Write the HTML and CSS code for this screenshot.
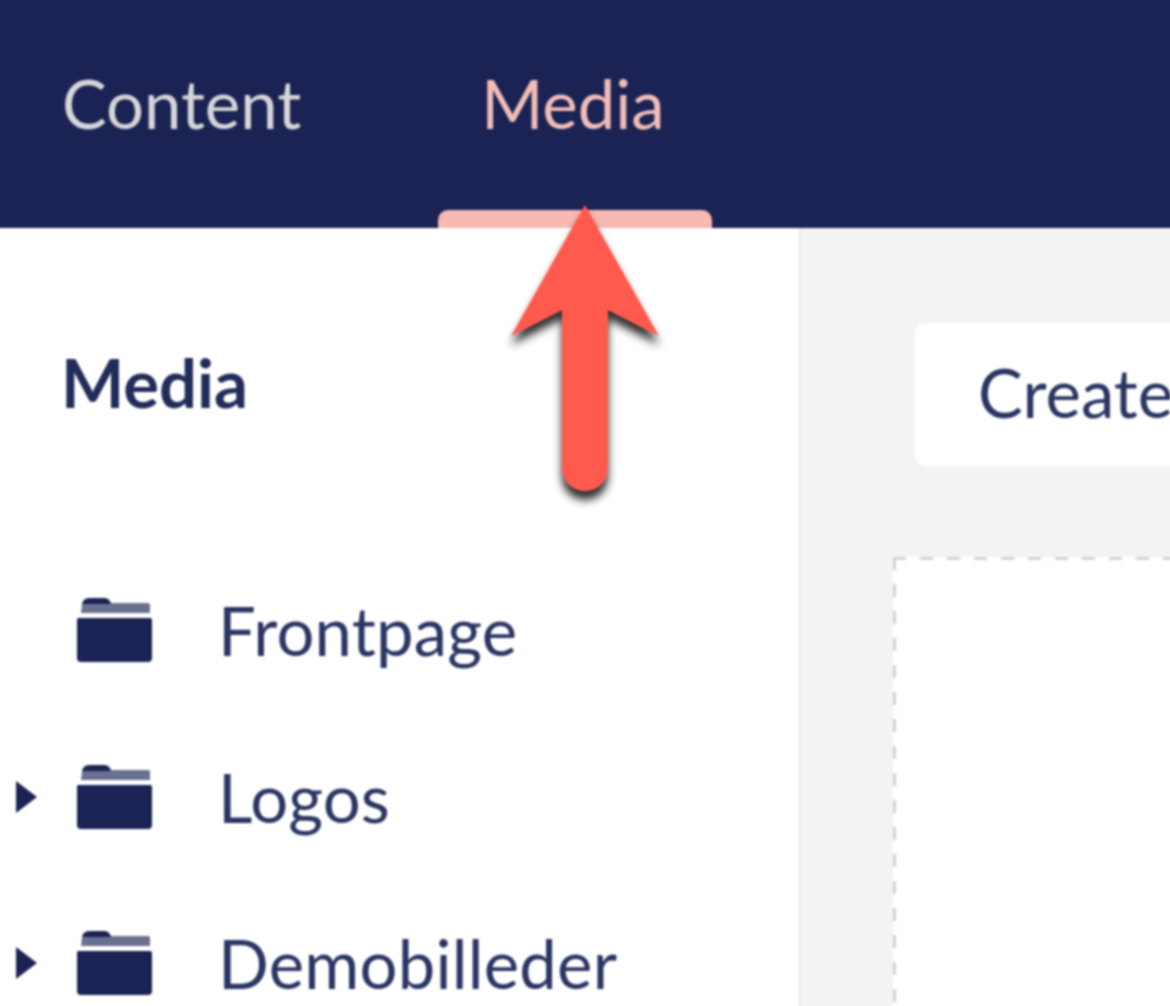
FILE: index.html
```html
<!DOCTYPE html>
<html lang="en">
<head>
<meta charset="utf-8">
<title>Media</title>
<link rel="stylesheet" href="styles.css">
</head>
<body>
<div class="page">
  <header class="topbar">
    <nav class="tabs">
      <a class="tab">Content</a>
      <a class="tab tab-active">Media</a>
    </nav>
  </header>
  <div class="body">
    <aside class="sidebar">
      <h2 class="side-title">Media</h2>
      <ul class="tree">
        <li class="tree-row">
          <span class="caret caret-none"></span>
          <svg class="folder" viewBox="0 0 76 66"><use href="#folder-shape"/></svg>
          <span class="tree-label">Frontpage</span>
        </li>
        <li class="tree-row">
          <span class="caret"></span>
          <svg class="folder" viewBox="0 0 76 66"><use href="#folder-shape"/></svg>
          <span class="tree-label">Logos</span>
        </li>
        <li class="tree-row">
          <span class="caret"></span>
          <svg class="folder" viewBox="0 0 76 66"><use href="#folder-shape"/></svg>
          <span class="tree-label">Demobilleder</span>
        </li>
      </ul>
    </aside>
    <main class="main">
      <button class="create">Create</button>
      <div class="dropzone"></div>
    </main>
  </div>
  <svg class="arrow" viewBox="0 0 190 320" width="190" height="320">
    <defs>
      <filter id="arrow-shadow" x="-30%" y="-10%" width="160%" height="125%">
        <feDropShadow dx="0" dy="9" stdDeviation="4.5" flood-color="#222222" flood-opacity="0.95"/>
      </filter>
    </defs>
    <path filter="url(#arrow-shadow)" fill="#ff5a4d" d="M95 5 L169 136 L118 110 L118 268 A23 23 0 0 1 72 268 L72 110 L21 136 Z"/>
  </svg>
  <svg class="defs" width="0" height="0">
    <symbol id="folder-shape" viewBox="0 0 76 66">
      <path fill="#1a2353" d="M2 21 H74 A2 2 0 0 1 76 23 V61 A4 4 0 0 1 72 65 H5 A4 4 0 0 1 1 61 V23 A2 2 0 0 1 2 21 Z"/>
      <path fill="#1a2353" d="M6 8 Q7 1 14 1 H28 Q33 1 35 6 H72 A2 2 0 0 1 74 8 V16 H5 Z" opacity=".65"/>
      <path fill="#1a2353" d="M6 7 Q7 1 14 1 H28 Q33 1 35 7 Z"/>
    </symbol>
  </svg>
</div>
</body>
</html>
```
FILE: styles.css
```css
* { box-sizing: border-box; }
html, body { margin: 0; padding: 0; height: 100%; overflow: hidden; background: #fff; }
/* The page runs 10px past the window on every side so the soft focus has no faded edge. */
.page {
  position: relative;
  width: 1190px;
  height: 1026px;
  margin: -10px;
  overflow: hidden;
  display: flex;
  flex-direction: column;
  font-family: Lato, "Open Sans", sans-serif;
  color: #1a2353;
  filter: blur(1.2px);
}
.topbar {
  flex: 0 0 238px;
  background: #1a2353;
  display: flex;
  align-items: stretch;
}
.tabs { display: flex; padding-left: 26px; gap: 91px; }
.tab {
  position: relative;
  padding: 76px 46px 0;
  font-size: 67px;
  line-height: 74px;
  color: #d6d6d8;
}
.tab-active { padding-left: 43px; padding-right: 47px; color: #f2bdb8; }
.tab-active::after {
  content: "";
  position: absolute;
  left: 0;
  right: 0;
  bottom: 0;
  height: 18px;
  background: #f8b9b3;
  border-radius: 10px 10px 0 0;
}
.body { flex: 1; display: flex; min-height: 0; }
.sidebar {
  flex: 0 0 811px;
  background: #fff;
  border-right: 2px solid #e9e9eb;
  padding: 116px 0 0 71px;
}
.side-title {
  margin: 0;
  font-size: 67px;
  line-height: 76px;
  font-weight: 700;
  color: #222c5a;
}
.tree { list-style: none; margin: 127px 0 0 -45px; padding: 0; }
.tree-row {
  display: flex;
  align-items: center;
  height: 166.5px;
}
.caret {
  width: 0;
  height: 0;
  border-left: 21px solid #1a2353;
  border-top: 16px solid transparent;
  border-bottom: 16px solid transparent;
  margin-right: 39px;
}
.caret-none { visibility: hidden; }
.folder { width: 76px; height: 66px; flex: none; }
.tree-label { margin-left: 66px; font-size: 67px; line-height: 74px; letter-spacing: .2px; color: #2b3563; }
.main {
  flex: 1;
  background: #f4f2f3;
  padding: 95px 0 0 114px;
  min-width: 0;
}
.create {
  display: block;
  width: 400px;
  height: 143px;
  margin: 0;
  padding: 0 0 6px 63px;
  border: 0;
  border-radius: 10px;
  background: #fff;
  color: #2b3563;
  font: 400 67px Lato, "Open Sans", sans-serif;
  text-align: left;
}
.dropzone {
  width: 400px;
  height: 500px;
  margin: 91px 0 0 -22px;
  background-color: #fff;
  background-image:
    repeating-linear-gradient(90deg, #d4d3d6 0 13px, transparent 13px 27px),
    repeating-linear-gradient(180deg, #d4d3d6 0 13px, transparent 13px 27px);
  background-size: 100% 3px, 3px 100%;
  background-position: 0 0, 0 0;
  background-repeat: no-repeat;
}
.arrow { position: absolute; left: 500px; top: 210px; }
.defs { position: absolute; }
```
